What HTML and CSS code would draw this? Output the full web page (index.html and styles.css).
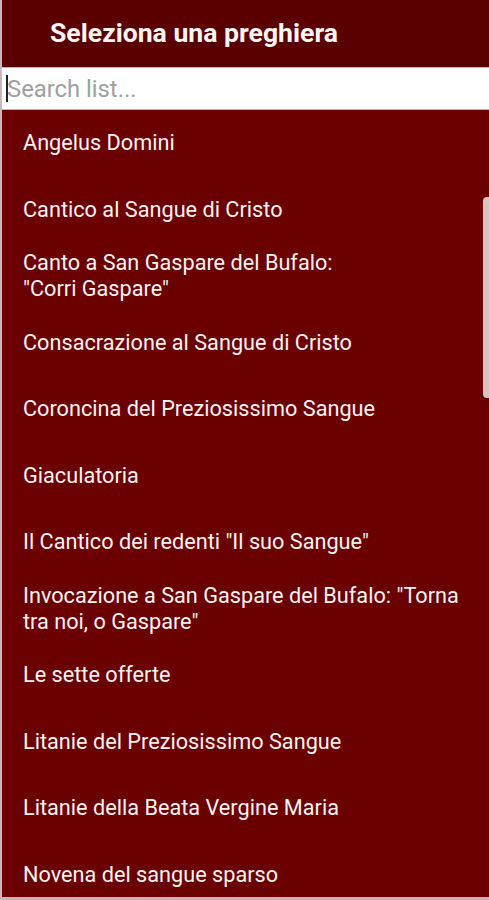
FILE: index.html
```html
<!DOCTYPE html>
<html lang="it">
<head>
  <meta charset="UTF-8" />
  <meta name="viewport" content="width=device-width, initial-scale=1" />
  <title>Seleziona una preghiera</title>
  <link rel="stylesheet" href="styles.css">
</head>
<body>
  <div class="screen">
    <header class="toolbar">
      <h1>Seleziona una preghiera</h1>
    </header>

    <div class="search">
      <span class="caret"></span>
      <input type="text" placeholder="Search list..." />
    </div>

    <!-- Elenco preghiere -->
    <ul class="list">
      <li>Angelus Domini</li>
      <li>Cantico al Sangue di Cristo</li>
      <li>Canto a San Gaspare del Bufalo:<br>"Corri Gaspare"</li>
      <li>Consacrazione al Sangue di Cristo</li>
      <li>Coroncina del Preziosissimo Sangue</li>
      <li>Giaculatoria</li>
      <li>Il Cantico dei redenti "Il suo Sangue"</li>
      <li>Invocazione a San Gaspare del Bufalo: "Torna tra noi, o Gaspare"</li>
      <li>Le sette offerte</li>
      <li>Litanie del Preziosissimo Sangue</li>
      <li>Litanie della Beata Vergine Maria</li>
      <li>Novena del sangue sparso</li>
    </ul>

    <div class="scrollbar"></div>
  </div>
</body>
</html>
```

FILE: styles.css
```css
* {
  box-sizing: border-box;
}
body {
  margin: 0;
  font-family: Roboto, 'Noto Sans', sans-serif;
  background: #6b0000;
}

.screen {
  position: relative;
  width: 489px;
  height: 900px;
  overflow: hidden;
  border-left: 2px solid #c9b8b8;
  border-bottom: 3px solid #cdb3b3;
  background: #6b0000;
}

.toolbar {
  height: 67px;
  background: #5b0000;
  display: flex;
  align-items: center;
  padding-left: 48px;
  padding-bottom: 2px;
}

.toolbar h1 {
  margin: 0;
  color: #fbf6f6;
  font-size: 26.6px;
  font-weight: 700;
}

.search {
  display: flex;
  align-items: center;
  height: 43px;
  background: #fff;
  border-top: 1px solid #c9b0b0;
  border-bottom: 1px solid #c9b0b0;
  padding-left: 4px;
}

.caret {
  width: 2px;
  height: 27px;
  background: #222;
}

.search input {
  border: none;
  outline: none;
  background: transparent;
  font-family: inherit;
  font-size: 23.8px;
  padding: 0;
  margin-left: -1px;
  width: 100%;
}

.search input::placeholder {
  color: #a0a0a0;
}

.list {
  list-style: none;
  margin: 0;
  padding: 0;
}

.list li {
  height: 66.5px;
  display: flex;
  align-items: center;
  padding: 0 20px 0 21px;
  color: #f7f2f2;
  font-size: 21.7px;
  line-height: 26px;
}

.scrollbar {
  position: absolute;
  right: 0;
  top: 197px;
  width: 6px;
  height: 201px;
  border-radius: 4px 0 0 4px;
  background: #d8c2c2;
}
```
